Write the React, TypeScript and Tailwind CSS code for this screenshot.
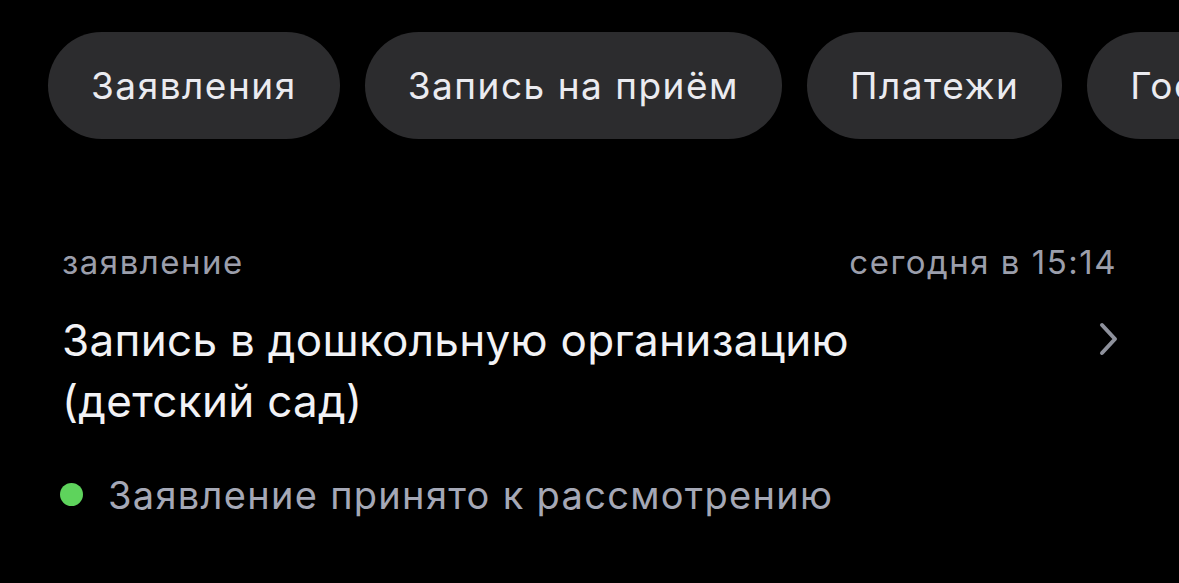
import React from 'react';

const TABS = ['Заявления', 'Запись на приём', 'Платежи', 'Госпочта'];

const App: React.FC = () => {
  return (
    <div className="w-[1179px] h-[583px] bg-black overflow-hidden font-['Inter',sans-serif]">
      {/* Tabs */}
      <div className="flex gap-[25px] pl-[48px] pt-[32px] whitespace-nowrap">
        {TABS.map((t) => (
          <div
            key={t}
            className="shrink-0 h-[107px] px-[43px] rounded-full bg-[#2c2c2e] flex items-center text-[37px] text-[#ebebf0] tracking-[1.5px]"
          >
            {t}
          </div>
        ))}
      </div>

      {/* Item */}
      <div className="px-[62px] pt-[105px]">
        <div className="flex justify-between items-center text-[33px] text-[#9b9eab] leading-[36px] tracking-[1.5px]">
          <span>заявление</span>
          <span>сегодня в 15:14</span>
        </div>
        <div className="flex justify-between items-start mt-[30px]">
          <div className="text-[44px] leading-[61px] text-[#f2f2f5] tracking-[0.3px]">
            Запись в дошкольную организацию
            <br />
            (детский сад)
          </div>
          <svg width="20" height="34" viewBox="0 0 20 34" className="mt-[12px] mr-[-2px]">
            <path d="M3 3 L16 17 L3 31" fill="none" stroke="#8e919c" strokeWidth="4" strokeLinecap="round" strokeLinejoin="round" />
          </svg>
        </div>
        <div className="flex items-center mt-[40px] h-[46px]">
          <span className="w-[23px] h-[23px] rounded-full bg-[#5ed35c] ml-[-2px] mr-[25px] mt-[-2px]" />
          <span className="text-[38px] leading-[46px] text-[#a5a8b6] tracking-[1.3px]">Заявление принято к рассмотрению</span>
        </div>
      </div>
    </div>
  );
};

export default App;
